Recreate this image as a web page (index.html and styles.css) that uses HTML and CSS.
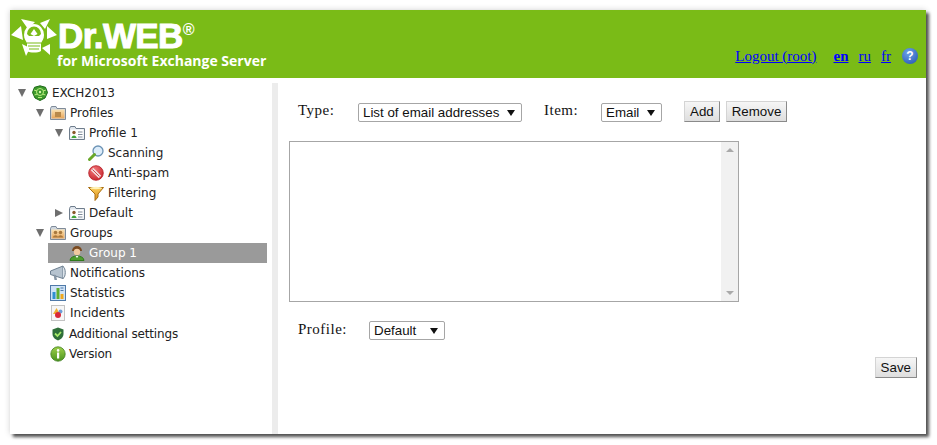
FILE: index.html
```html
<!DOCTYPE html>
<html lang="en">
<head>
  <meta charset="UTF-8" />
  <title>Dr.WEB for Microsoft Exchange Server</title>
  <link rel="stylesheet" href="styles.css">
</head>
<body>
  <svg class="defs" width="0" height="0">
    <defs>
      <linearGradient id="folderFill" x1="0" y1="0" x2="0" y2="1"><stop offset="0" stop-color="#fbe3b4"/><stop offset="1" stop-color="#e9a65a"/></linearGradient>
      <linearGradient id="greenFill" x1="0" y1="0" x2="0" y2="1"><stop offset="0" stop-color="#9ed04a"/><stop offset="1" stop-color="#4b9420"/></linearGradient>
      <linearGradient id="goldFill" x1="0" y1="0" x2="0" y2="1"><stop offset="0" stop-color="#fbcf5a"/><stop offset="1" stop-color="#d98a1c"/></linearGradient>
      <radialGradient id="redFill" cx="0.4" cy="0.3" r="0.8"><stop offset="0" stop-color="#f2787a"/><stop offset="1" stop-color="#c41f28"/></radialGradient>

      <symbol id="i-server" viewBox="0 0 16 16">
        <path d="M8 .8l5.500 1.500 2 5.200-2.500 5.500-5 2.500-5-2.500L.5 7.500l2-5.200z" fill="#3d9a2c" stroke="#1f6a18"/>
        <circle cx="8" cy="7" r="3.500" fill="none" stroke="#b7ea7c"/>
        <path d="M2 5l3 1M14 5l-3 1M2.500 10l3-1M13.500 10l-3-1M6 12.500h4" stroke="#b7ea7c" fill="none"/>
        <circle cx="8" cy="7" r="1.200" fill="#d8f5a8"/>
      </symbol>
      <symbol id="i-folder" viewBox="0 0 16 16">
        <path d="M.5 3.500V14.500h15V3.500H7L6 1.500H1.500z" fill="#cfd6de" stroke="#7f8b99"/>
        <rect x="1.500" y="4.500" width="13" height="9" fill="url(#folderFill)"/>
        <rect x="5" y="7" width="6" height="5" fill="#b9894a"/>
      </symbol>
      <symbol id="i-groups" viewBox="0 0 16 16">
        <path d="M.5 3.500V14.500h15V3.500H7L6 1.500H1.500z" fill="#cfd6de" stroke="#7f8b99"/>
        <rect x="1.500" y="4.500" width="13" height="9" fill="url(#folderFill)"/>
        <circle cx="5.500" cy="7.500" r="1.800" fill="#a9793e"/>
        <circle cx="10.500" cy="7.500" r="1.800" fill="#a9793e"/>
        <path d="M3 12.500c0-3 5-3 5 0zM8 12.500c0-3 5-3 5 0z" fill="#a9793e"/>
      </symbol>
      <symbol id="i-profile" viewBox="0 0 16 16">
        <path d="M.5 3.500V14.500h15V3.500H7L6 1.500H1.500z" fill="#dfe5ec" stroke="#6f7d8c"/>
        <rect x="1.500" y="4.500" width="13" height="9" fill="#fff"/>
        <circle cx="5" cy="7.500" r="1.700" fill="#8a5a2a"/>
        <path d="M2.500 13c0-3.500 5-3.500 5 0z" fill="#3fa535"/>
        <path d="M9 7h4.500M9 9.500h4.500M9 12h4.500" stroke="#7f8b99"/>
      </symbol>
      <symbol id="i-scan" viewBox="0 0 16 16">
        <circle cx="10" cy="6" r="5" fill="#dcecfa" stroke="#6c93b5" stroke-width="1.300"/>
        <path d="M6.500 9.500L1.500 14.500" stroke="#6aa82a" stroke-width="3" stroke-linecap="round"/>
      </symbol>
      <symbol id="i-block" viewBox="0 0 16 16">
        <circle cx="8" cy="8" r="7.300" fill="url(#redFill)" stroke="#b51c24" stroke-width=".8"/>
        <path d="M4 4l8 8" stroke="#f3dcdc" stroke-width="3.600"/>
        <path d="M4.500 4.500l7 7" stroke="#d0484c" stroke-width="1"/>
      </symbol>
      <symbol id="i-filter" viewBox="0 0 16 16">
        <path d="M.5 2.500h15L10 9v3L7 15.500V9z" fill="url(#goldFill)" stroke="#a96e12"/>
        <ellipse cx="8" cy="3" rx="6" ry="1.200" fill="#fff2b8"/>
      </symbol>
      <symbol id="i-user" viewBox="0 0 16 16">
        <path d="M3 6a5 5 0 0 1 10 0z" fill="#7a4a20"/>
        <circle cx="8" cy="7" r="3.200" fill="#f0c9a0"/>
        <path d="M1 15.500c0-6 14-6 14 0z" fill="#4f9e2f" stroke="#2f7a1c"/>
        <path d="M6.500 11l1.500 2 1.500-2z" fill="#fff"/>
      </symbol>
      <symbol id="i-notify" viewBox="0 0 16 16">
        <path d="M.5 6L13 1v12.500L.5 9.500z" fill="#b6c3cf" stroke="#6d7f90"/>
        <path d="M13 1.500c3 1.500 3 10.500 0 12" fill="#dbe3ea" stroke="#6d7f90"/>
        <path d="M3.500 9.500l1 5.500h2.500l-1-5z" fill="#8796a5"/>
      </symbol>
      <symbol id="i-stats" viewBox="0 0 16 16">
        <rect x=".5" y=".5" width="15" height="15" fill="#cfe3f7" stroke="#4f79a8"/>
        <rect x="2.500" y="7" width="3" height="7" fill="#2f8fd0"/>
        <rect x="6.500" y="3" width="3" height="11" fill="#5fae2e"/>
        <rect x="10.500" y="9" width="3" height="5" fill="#eea820"/>
        <path d="M10.500 3h3M10.500 5.500h3" stroke="#4f79a8"/>
      </symbol>
      <symbol id="i-incident" viewBox="0 0 16 16">
        <rect x="1.500" y=".5" width="13" height="15" fill="#f7f7f7" stroke="#8a8a8a" stroke-dasharray="1 1"/>
        <path d="M6.500 3l3.500 6H3z" fill="#f0b030"/>
        <circle cx="10.500" cy="6.500" r="2" fill="#6f9fd8"/>
        <circle cx="8" cy="10" r="3" fill="#d8283a"/>
      </symbol>
      <symbol id="i-shield" viewBox="0 0 16 16">
        <path d="M8 1.500l5.500 2v4.500c0 3.500-3 5.500-5.500 6.500-2.500-1-5.500-3-5.500-6.500V3.500z" fill="#2f6f3a"/>
        <path d="M5 7.500l2.500 2.500 3.500-4" fill="none" stroke="#a6ea6a" stroke-width="1.800"/>
      </symbol>
      <symbol id="i-info" viewBox="0 0 16 16">
        <circle cx="8" cy="8" r="7.200" fill="url(#greenFill)" stroke="#3f7f1f" stroke-width=".8"/>
        <rect x="7" y="6.500" width="2.200" height="6" fill="#fff"/>
        <circle cx="8.100" cy="4.400" r="1.300" fill="#fff"/>
      </symbol>
    </defs>
  </svg>

  <div class="window">
    <header class="header">
      <div class="brand">
        <svg class="spider" width="47" height="40" viewBox="0 0 47 40">
          <g fill="#fff">
            <path d="M10 2l14 3-7 7zM39 2l-10 4 5 6zM0 18l10-9 2 14zM46 18L36 9v13zM15 39l-4-12 8 4zM39 38l-8-7 8-4z"/>
            <path d="M13 18a9.500 10.500 0 0 1 20 0c0 4-2 6-3 8v8c-3 2-11 2-14 0v-8c-1-2-3-4-3-8z"/>
          </g>
          <path d="M16 17a7 7.500 0 0 1 14 0l-2 2h-10z" fill="#7abb17"/>
          <path d="M19.500 17l3.500-5 3.500 5-3.500 2z" fill="#fff"/>
          <path d="M16 26h14M17 29h12M18 32h10" stroke="#7abb17" stroke-width="1.200"/>
        </svg>
        <div class="brand-text">
          <div class="brand-name">Dr.WEB<sup>®</sup></div>
          <div class="brand-sub">for Microsoft Exchange Server</div>
        </div>
      </div>
      <nav class="header-links">
        <a href="#" class="logout">Logout (root)</a>
        <a href="#" class="lang current">en</a>
        <a href="#" class="lang">ru</a>
        <a href="#" class="lang">fr</a>
        <span class="help">?</span>
      </nav>
    </header>

    <div class="main">
      <aside class="sidebar">
        <ul class="tree">
          <li>
            <div class="row"><span class="arrow open"></span><svg class="icon"><use href="#i-server"/></svg><span>EXCH2013</span></div>
            <ul class="top">
              <li>
                <div class="row"><span class="arrow open"></span><svg class="icon"><use href="#i-folder"/></svg><span>Profiles</span></div>
                <ul>
                  <li>
                    <div class="row"><span class="arrow open"></span><svg class="icon"><use href="#i-profile"/></svg><span>Profile 1</span></div>
                    <ul>
                      <li><div class="row"><span class="arrow"></span><svg class="icon"><use href="#i-scan"/></svg><span>Scanning</span></div></li>
                      <li><div class="row"><span class="arrow"></span><svg class="icon"><use href="#i-block"/></svg><span>Anti-spam</span></div></li>
                      <li><div class="row"><span class="arrow"></span><svg class="icon"><use href="#i-filter"/></svg><span>Filtering</span></div></li>
                    </ul>
                  </li>
                  <li><div class="row"><span class="arrow closed"></span><svg class="icon"><use href="#i-profile"/></svg><span>Default</span></div></li>
                </ul>
              </li>
              <li>
                <div class="row"><span class="arrow open"></span><svg class="icon"><use href="#i-groups"/></svg><span>Groups</span></div>
                <ul>
                  <li><div class="row selected"><span class="arrow"></span><svg class="icon"><use href="#i-user"/></svg><span>Group 1</span></div></li>
                </ul>
              </li>
              <li><div class="row"><span class="arrow"></span><svg class="icon"><use href="#i-notify"/></svg><span>Notifications</span></div></li>
              <li><div class="row"><span class="arrow"></span><svg class="icon"><use href="#i-stats"/></svg><span>Statistics</span></div></li>
              <li><div class="row"><span class="arrow"></span><svg class="icon"><use href="#i-incident"/></svg><span>Incidents</span></div></li>
              <li class="low"><div class="row tight"><span class="arrow"></span><svg class="icon"><use href="#i-shield"/></svg><span>Additional settings</span></div></li>
              <li><div class="row tight"><span class="arrow"></span><svg class="icon"><use href="#i-info"/></svg><span>Version</span></div></li>
            </ul>
          </li>
        </ul>
      </aside>
      <div class="splitter"></div>

      <section class="content">
        <div class="filter-bar">
          <label class="field-label type-label">Type:</label>
          <select class="combo type-combo"><option>List of email addresses</option></select>
          <label class="field-label item-label">Item:</label>
          <select class="combo item-combo"><option>Email</option></select>
          <button class="btn add-btn">Add</button>
          <button class="btn">Remove</button>
        </div>

        <div class="listbox">
          <div class="list-items"></div>
          <div class="scrollbar"><span class="sb-up"></span><span class="sb-down"></span></div>
        </div>

        <div class="profile-bar">
          <label class="field-label profile-label">Profile:</label>
          <select class="combo profile-combo"><option>Default</option></select>
        </div>

        <div class="actions"><button class="btn">Save</button></div>
      </section>
    </div>
  </div>
</body>
</html>
```

FILE: styles.css
```css
* { box-sizing: border-box; }

html, body {
  margin: 0;
  height: 100%;
  background: #fff;
  overflow: hidden;
}

.defs { position: absolute; }

.window {
  width: 916px;
  height: 424px;
  margin: 10px 0 0 10px;
  background: #fff;
  box-shadow: 3px 3px 3px rgba(0, 0, 0, 0.65), 0 0 6px rgba(0, 0, 0, 0.18);
  display: flex;
  flex-direction: column;
}

/* Green top bar */
.header {
  height: 68px;
  background: #7abb17;
  display: flex;
  justify-content: space-between;
  flex-shrink: 0;
}

.brand {
  display: flex;
  padding: 7px 0 0 1px;
}

.spider { flex-shrink: 0; }

.brand-text {
  color: #fff;
  padding-top: 4px;
}

.brand-name {
  font-family: "Liberation Sans", sans-serif;
  font-weight: 700;
  font-size: 35px;
  line-height: 30px;
  letter-spacing: -0.6px;
  -webkit-text-stroke: 1px #fff;
  white-space: nowrap;
}

.brand-name sup {
  font-size: 16px;
  line-height: 0;
  vertical-align: 13px;
  letter-spacing: 0;
  -webkit-text-stroke: 0;
}

.brand-sub {
  font-family: "Open Sans", sans-serif;
  font-weight: 700;
  font-size: 14px;
  line-height: 18px;
  margin: 1px 0 0 -1px;
  white-space: nowrap;
}

.header-links {
  display: flex;
  align-items: center;
  padding: 24px 8px 0 0;
  height: 68px;
  font-family: "Liberation Serif", serif;
  font-size: 15px;
}

.header-links a { color: #00f; }

.logout { margin-right: 17px; }
.lang { margin-right: 10px; }
.lang.current { font-weight: 700; }

.help {
  width: 16px;
  height: 16px;
  margin-left: 1px;
  border-radius: 50%;
  background: radial-gradient(circle at 40% 30%, #6ea4ea, #1f4fb0);
  color: #fff;
  font: 700 12px/16px "Liberation Sans", sans-serif;
  text-align: center;
}

.main {
  flex: 1;
  display: flex;
  min-height: 0;
}

/* Left tree */
.sidebar {
  width: 262px;
  padding: 5px 5px 0 0;
  font-family: "DejaVu Sans", sans-serif;
  font-size: 12px;
  color: #222;
}

.tree, .tree ul {
  list-style: none;
  margin: 0;
  padding: 0;
}

.tree { padding-left: 8px; }
.tree ul { padding-left: 19px; }
.tree ul.top { padding-left: 18px; }

.row {
  display: flex;
  align-items: center;
  height: 20px;
  white-space: nowrap;
}

.row .icon {
  width: 16px;
  height: 16px;
  margin-right: 4px;
  flex-shrink: 0;
}

.row.tight .icon { margin-right: 3px; }

.row.tight span:last-child { letter-spacing: -0.15px; }

.low { margin-top: 1px; }

.arrow {
  width: 14px;
  height: 8px;
  flex-shrink: 0;
}

.arrow.open {
  border-style: solid;
  border-color: #6e6e6e transparent transparent;
  border-width: 8px 4px 0;
  width: 8px;
  margin-right: 6px;
}

.arrow.closed {
  border-style: solid;
  border-color: transparent transparent transparent #6e6e6e;
  border-width: 4px 0 4px 8px;
  width: 8px;
  margin-right: 6px;
}

.row.selected {
  background: #9a9a9a;
  color: #fff;
  margin-left: -7px;
  padding-left: 7px;
}

.splitter {
  width: 6px;
  margin-top: 5px;
  background: #ececec;
  flex-shrink: 0;
}

/* Right form */
.content {
  flex: 1;
  padding: 23px 9px 0 11px;
  font-family: "Liberation Sans", sans-serif;
  font-size: 13.33px;
}

.field-label {
  font-family: "Liberation Serif", serif;
  font-size: 15px;
  color: #111;
  letter-spacing: 0.5px;
}

.filter-bar {
  display: flex;
  align-items: flex-start;
  height: 21px;
  padding-left: 9px;
}

.filter-bar .field-label { margin-top: 1px; }

.type-label { width: 60px; }
.item-label { width: 57px; margin-left: 22px; }

.combo {
  appearance: none;
  -webkit-appearance: none;
  height: 19px;
  margin-top: 2px;
  padding: 0 0 0 4px;
  border: 1px solid #a6a6a6;
  border-radius: 2px;
  font-family: "Liberation Sans", sans-serif;
  font-size: 13.33px;
  line-height: 17px;
  color: #111;
  background: #fff url("data:image/svg+xml,%3Csvg xmlns='http://www.w3.org/2000/svg' width='8' height='6'%3E%3Cpath d='M0 0h8L4 6z' fill='%23111'/%3E%3C/svg%3E") no-repeat right 6px center;
}

.type-combo { width: 164px; }
.item-combo { width: 61px; }
.profile-combo { width: 76px; margin-top: 0; }

.btn {
  height: 21px;
  padding: 0 5px;
  border: 1px solid;
  border-color: #d4d4d4 #8a8a8a #8a8a8a #d4d4d4;
  background: linear-gradient(#f6f6f6, #dedede);
  font-family: "Liberation Sans", sans-serif;
  font-size: 13.33px;
  line-height: 18px;
  color: #111;
}

.add-btn {
  margin-left: 22px;
  margin-right: 6px;
}

.listbox {
  display: flex;
  width: 450px;
  height: 161px;
  margin-top: 19px;
  border: 1px solid #a6a6a6;
}

.list-items { flex: 1; }

.scrollbar {
  width: 17px;
  background: #f1f1f1;
  display: flex;
  flex-direction: column;
  justify-content: space-between;
  align-items: center;
  padding: 6px 0;
}

.sb-up, .sb-down {
  width: 0;
  height: 0;
  border-left: 4px solid transparent;
  border-right: 4px solid transparent;
}

.sb-up { border-bottom: 4px solid #a9a9a9; }
.sb-down { border-top: 4px solid #a9a9a9; }

.profile-bar {
  display: flex;
  align-items: flex-start;
  height: 19px;
  margin-top: 19px;
  padding-left: 9px;
}

.profile-label { width: 71px; }

.actions {
  display: flex;
  justify-content: flex-end;
  margin-top: 17px;
}
```
